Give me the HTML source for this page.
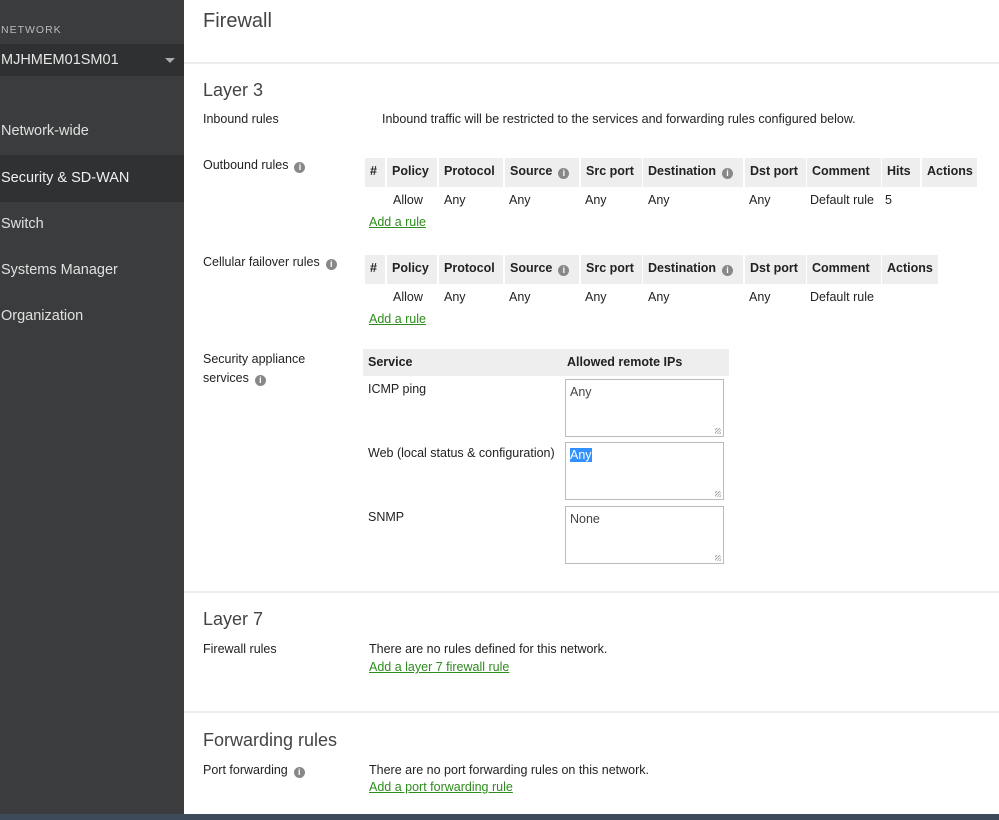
<!DOCTYPE html>
<html><head><meta charset="utf-8"><style>
*{margin:0;padding:0;box-sizing:border-box}
body{width:999px;height:820px;overflow:hidden;position:relative;font-family:"Liberation Sans",Arial,sans-serif;font-size:13px;color:#222;background:#fff}
.a{position:absolute;white-space:nowrap}
#side{position:absolute;left:0;top:0;width:184px;height:814px;background:#3b3c3d}
.nav{position:absolute;left:0;width:184px;color:#e0e0e0;font-size:14.5px;padding-left:1px}
.h{font-size:18px;color:#444}
.lbl{font-size:12.5px;color:#222}
.sep{position:absolute;left:184px;width:815px;height:2px;background:#ececec}
.c{position:absolute;background:#eee;height:29px;font-weight:bold;font-size:12.5px;padding:6px 5px 0 5px;white-space:nowrap}
.d{position:absolute;font-size:12.5px;white-space:nowrap}
.lnk{position:absolute;color:#2e8b1e;text-decoration:underline;font-size:12.5px;white-space:nowrap}
.i{display:inline-block;width:11px;height:11px;border-radius:50%;background:#888;color:#fff;font-size:9px;line-height:11px;text-align:center;font-weight:bold;vertical-align:-1px;margin-left:6px}
.ta{position:absolute;left:565px;width:159px;height:58px;border:1px solid #bbb;padding:5px 4px;font-size:12.5px;color:#444}
.ta:after{content:"";position:absolute;right:2px;bottom:2px;width:6px;height:6px;background:repeating-linear-gradient(135deg,transparent 0 1px,#aaa 1px 2px)}
</style></head><body>
<div id="side">
<div class="a" style="left:1px;top:24px;font-size:10.5px;color:#bbb;letter-spacing:1px">NETWORK</div>
<div class="a" style="left:0;top:44px;width:184px;height:32px;background:#2f3031"></div>
<div class="a" style="left:1px;top:52px;font-size:14.5px;color:#e6e6e6">MJHMEM01SM01</div>
<div class="a" style="left:165px;top:58px;width:0;height:0;border-left:5px solid transparent;border-right:5px solid transparent;border-top:5px solid #aaa"></div>
<div class="nav" style="top:123px">Network-wide</div>
<div class="a" style="left:0;top:155px;width:184px;height:47px;background:#303132"></div>
<div class="nav" style="top:170px;color:#f0f0f0">Security &amp; SD-WAN</div>
<div class="nav" style="top:216px">Switch</div>
<div class="nav" style="top:262px">Systems Manager</div>
<div class="nav" style="top:308px">Organization</div>
</div>
<div class="a" style="left:0;top:814px;width:999px;height:6px;background:#3c4a5a"></div>

<div class="a h" style="left:203px;top:10px;font-size:20px">Firewall</div>
<div class="sep" style="top:62px"></div>
<div class="a h" style="left:203px;top:80px">Layer 3</div>
<div class="a lbl" style="left:203px;top:112px">Inbound rules</div>
<div class="a lbl" style="left:382px;top:112px">Inbound traffic will be restricted to the services and forwarding rules configured below.</div>

<div class="a lbl" style="left:203px;top:158px">Outbound rules<span class="i">i</span></div>
<div class="c" style="left:365px;top:158px;width:20px">#</div>
<div class="c" style="left:387px;top:158px;width:50px">Policy</div>
<div class="c" style="left:439px;top:158px;width:64px">Protocol</div>
<div class="c" style="left:505px;top:158px;width:74px">Source<span class="i">i</span></div>
<div class="c" style="left:581px;top:158px;width:61px">Src port</div>
<div class="c" style="left:643px;top:158px;width:100px">Destination<span class="i">i</span></div>
<div class="c" style="left:745px;top:158px;width:61px">Dst port</div>
<div class="c" style="left:807px;top:158px;width:74px">Comment</div>
<div class="c" style="left:882px;top:158px;width:38px">Hits</div>
<div class="c" style="left:922px;top:158px;width:55px">Actions</div>
<div class="d" style="left:393px;top:193px">Allow</div>
<div class="d" style="left:444px;top:193px">Any</div>
<div class="d" style="left:509px;top:193px">Any</div>
<div class="d" style="left:585px;top:193px">Any</div>
<div class="d" style="left:648px;top:193px">Any</div>
<div class="d" style="left:749px;top:193px">Any</div>
<div class="d" style="left:810px;top:193px">Default rule</div>
<div class="d" style="left:885px;top:193px">5</div>
<div class="lnk" style="left:369px;top:215px">Add a rule</div>

<div class="a lbl" style="left:203px;top:255px">Cellular failover rules<span class="i">i</span></div>
<div class="c" style="left:365px;top:255px;width:20px">#</div>
<div class="c" style="left:387px;top:255px;width:50px">Policy</div>
<div class="c" style="left:439px;top:255px;width:64px">Protocol</div>
<div class="c" style="left:505px;top:255px;width:74px">Source<span class="i">i</span></div>
<div class="c" style="left:581px;top:255px;width:61px">Src port</div>
<div class="c" style="left:643px;top:255px;width:100px">Destination<span class="i">i</span></div>
<div class="c" style="left:745px;top:255px;width:61px">Dst port</div>
<div class="c" style="left:807px;top:255px;width:74px">Comment</div>
<div class="c" style="left:882px;top:255px;width:56px">Actions</div>
<div class="d" style="left:393px;top:290px">Allow</div>
<div class="d" style="left:444px;top:290px">Any</div>
<div class="d" style="left:509px;top:290px">Any</div>
<div class="d" style="left:585px;top:290px">Any</div>
<div class="d" style="left:648px;top:290px">Any</div>
<div class="d" style="left:749px;top:290px">Any</div>
<div class="d" style="left:810px;top:290px">Default rule</div>
<div class="lnk" style="left:369px;top:312px">Add a rule</div>

<div class="a lbl" style="left:203px;top:350px;line-height:19px">Security appliance<br>services<span class="i">i</span></div>
<div class="c" style="left:363px;top:349px;width:366px;height:27px"></div>
<div class="d" style="left:368px;top:355px;font-weight:bold">Service</div>
<div class="d" style="left:567px;top:355px;font-weight:bold">Allowed remote IPs</div>
<div class="d" style="left:368px;top:382px">ICMP ping</div>
<div class="ta" style="top:379px">Any</div>
<div class="d" style="left:368px;top:446px">Web (local status &amp; configuration)</div>
<div class="ta" style="top:442px"><span style="background:#3390ff;color:#fff">Any</span></div>
<div class="d" style="left:368px;top:510px">SNMP</div>
<div class="ta" style="top:506px">None</div>

<div class="sep" style="top:591px"></div>
<div class="a h" style="left:203px;top:609px">Layer 7</div>
<div class="a lbl" style="left:203px;top:642px">Firewall rules</div>
<div class="d" style="left:369px;top:642px">There are no rules defined for this network.</div>
<div class="lnk" style="left:369px;top:660px">Add a layer 7 firewall rule</div>

<div class="sep" style="top:711px"></div>
<div class="a h" style="left:203px;top:730px">Forwarding rules</div>
<div class="a lbl" style="left:203px;top:763px">Port forwarding<span class="i">i</span></div>
<div class="d" style="left:369px;top:763px">There are no port forwarding rules on this network.</div>
<div class="lnk" style="left:369px;top:780px">Add a port forwarding rule</div>
</body></html>
